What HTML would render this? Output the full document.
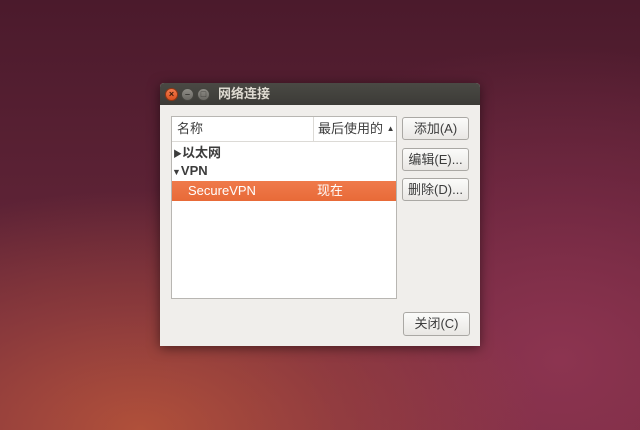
<!DOCTYPE html>
<html><head><meta charset="utf-8"><style>
*{margin:0;padding:0;box-sizing:border-box}
body{width:640px;height:430px;overflow:hidden;position:relative;font-family:"Liberation Sans","Noto Sans CJK SC",sans-serif;font-size:12px;
background:radial-gradient(ellipse 500px 300px at 140px 430px,#b0503a 0%,rgba(160,70,60,0.6) 40%,rgba(0,0,0,0) 80%),radial-gradient(ellipse 450px 350px at 560px 360px,#8c3450 0%,rgba(130,45,75,0.5) 50%,rgba(0,0,0,0) 90%),linear-gradient(180deg,#4b1a2c 0%,#5e2336 50%,#7a2e40 100%);}
.win{position:absolute;left:160px;top:83px;width:320px;height:263px;background:#f0eeeb;border-radius:4px 4px 0 0;box-shadow:0 2px 12px rgba(0,0,0,.5)}
.tb{height:22px;background:linear-gradient(#4a4944,#3c3b37);border-radius:4px 4px 0 0;position:relative;color:#dfdbd2;font-weight:bold;font-size:13px}
.tb span{position:absolute;left:58px;top:3px;line-height:16px}
.c{position:absolute;top:5px;width:13px;height:13px;border-radius:50%;background:linear-gradient(#8e8c86,#6a6863);border:1px solid #45443f;color:#3c3b37;font-size:9px;line-height:11px;text-align:center;font-weight:bold}
.list{position:absolute;left:11px;top:33px;width:226px;height:183px;background:#fff;border:1px solid #b8b6b2}
.hdr{height:25px;border-bottom:1px solid #dcdad6;position:relative;color:#3c3c3c}
.hdr .d{position:absolute;left:141px;top:0;height:24px;border-left:1px solid #dcdad6}
.t{position:absolute;white-space:nowrap;color:#3c3c3c;font-size:13px;line-height:16px}
.sel{position:absolute;left:0;top:64px;width:224px;height:20px;background:linear-gradient(#ef7a4b,#e86a38);color:#fff}
.btn{position:absolute;left:242px;width:67px;height:23px;border:1px solid #aaa8a4;border-radius:3px;background:linear-gradient(#fbfbfa,#e9e7e4);text-align:center;line-height:21px;color:#3c3c3c;font-size:13px}
</style></head><body>
<div class="win">
<div class="tb">
<div class="c" style="left:5px;background:linear-gradient(#f27b4e,#d9501f);border-color:#8e3514;color:#3a1a0a">×</div>
<div class="c" style="left:21px">–</div>
<div class="c" style="left:37px">□</div>
<span>网络连接</span></div>
<div class="list">
<div class="hdr"><div class="t" style="left:5px;top:4px">名称</div><div class="d"></div><div class="t" style="left:146px;top:4px">最后使用的 <span style="font-size:8px;vertical-align:2px">▲</span></div></div>
<div class="t" style="left:1px;top:28px;font-weight:bold"><span style="font-size:9px">▶</span>以太网</div>
<div class="t" style="left:0px;top:46px;font-weight:bold"><span style="font-size:9px">▼</span>VPN</div>
<div class="sel"><div class="t" style="color:#fff;left:16px;top:2px">SecureVPN</div><div class="t" style="color:#fff;left:145px;top:2px">现在</div></div>
</div>
<div class="btn" style="top:34px">添加(A)</div>
<div class="btn" style="top:65px">编辑(E)...</div>
<div class="btn" style="top:95px">删除(D)...</div>
<div class="btn" style="top:229px;left:243px;height:24px">关闭(C)</div>
</div>
</body></html>
